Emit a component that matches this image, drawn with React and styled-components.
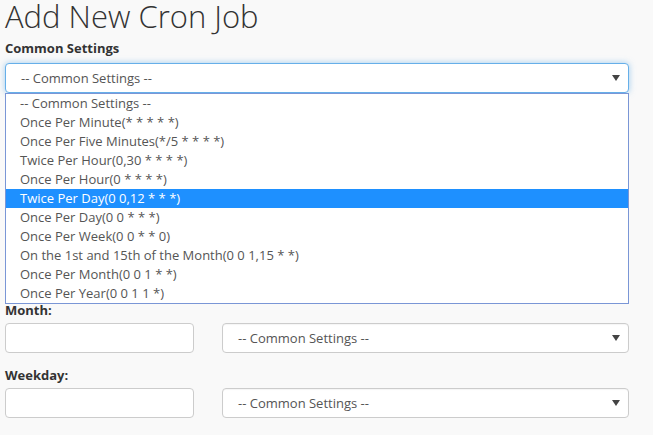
import React, { useState } from 'react';
import styled, { createGlobalStyle } from 'styled-components';

const GlobalStyle = createGlobalStyle`
  html, body {
    margin: 0;
    padding: 0;
    background: #f9f9f9;
    font-family: "Open Sans", "Liberation Sans", sans-serif;
    color: #333;
    overflow: hidden;
  }
`;

const Page = styled.div`
  padding: 0 24px 0 5px;
  width: 624px;
`;

const Title = styled.h1`
  margin: -4px 0 2px;
  font-size: 31px;
  font-weight: 300;
  line-height: 40px;
  color: #333;
`;

const Label = styled.label`
  display: block;
  font-size: 13px;
  font-weight: 700;
  line-height: 20px;
  margin-bottom: ${p => p.$gap || 5}px;
`;

const CommonBlock = styled.div`
  position: relative;
  margin-bottom: 12px;
`;

const SelectBox = styled.div`
  box-sizing: border-box;
  height: 30px;
  width: 100%;
  display: flex;
  align-items: center;
  justify-content: space-between;
  padding: 0 8px 0 15px;
  background: #fff;
  border: 1px solid ${p => (p.$focused ? '#66afe9' : '#ccc')};
  border-radius: 4px;
  box-shadow: ${p => (p.$focused ? '0 0 6px rgba(102,175,233,0.6)' : 'inset 0 1px 1px rgba(0,0,0,0.04)')};
  font-size: 13px;
  color: #555;
`;

const Caret = styled.span`
  width: 0;
  height: 0;
  border-left: 4px solid transparent;
  border-right: 4px solid transparent;
  border-top: 6px solid #444;
`;

const OptionList = styled.ul`
  position: absolute;
  left: 0;
  right: 0;
  top: 30px;
  margin: 0;
  padding: 0;
  list-style: none;
  background: #fff;
  border: 1px solid #7a96d6;
  z-index: 5;
`;

const Option = styled.li`
  height: 19px;
  line-height: 19px;
  padding-left: 14px;
  font-size: 13px;
  color: ${p => (p.$active ? '#fff' : '#555')};
  background: ${p => (p.$active ? '#1e90ff' : 'transparent')};
  white-space: nowrap;
`;

const Row = styled.div`
  margin-bottom: 12px;
`;

const Fields = styled.div`
  display: grid;
  grid-template-columns: 189px 1fr;
  gap: 28px;
`;

const Input = styled.input`
  box-sizing: border-box;
  height: 30px;
  width: 100%;
  margin: 0;
  padding: 0 10px;
  background: #fff;
  border: 1px solid #ccc;
  border-radius: 4px;
  font-family: inherit;
  font-size: 13px;
  color: #555;
`;

const options = [
  '-- Common Settings --',
  'Once Per Minute(* * * * *)',
  'Once Per Five Minutes(*/5 * * * *)',
  'Twice Per Hour(0,30 * * * *)',
  'Once Per Hour(0 * * * *)',
  'Twice Per Day(0 0,12 * * *)',
  'Once Per Day(0 0 * * *)',
  'Once Per Week(0 0 * * 0)',
  'On the 1st and 15th of the Month(0 0 1,15 * *)',
  'Once Per Month(0 0 1 * *)',
  'Once Per Year(0 0 1 1 *)',
];

const fields = ['Minute:', 'Hour:', 'Day:', 'Month:', 'Weekday:', 'Command:'];

const App = () => {
  const [active] = useState(5);

  return (
    <Page>
      <GlobalStyle />
      <Title>Add New Cron Job</Title>
      <Label>Common Settings</Label>
      <CommonBlock>
        <SelectBox $focused>
          <span>-- Common Settings --</span>
          <Caret />
        </SelectBox>
        <OptionList>
          {options.map((o, i) => (
            <Option key={o} $active={i === active}>{o}</Option>
          ))}
        </OptionList>
      </CommonBlock>
      {fields.map(f => (
        <Row key={f}>
          <Label $gap={3}>{f}</Label>
          <Fields>
            <Input type="text" />
            <SelectBox>
              <span>-- Common Settings --</span>
              <Caret />
            </SelectBox>
          </Fields>
        </Row>
      ))}
    </Page>
  );
};

export default App;
